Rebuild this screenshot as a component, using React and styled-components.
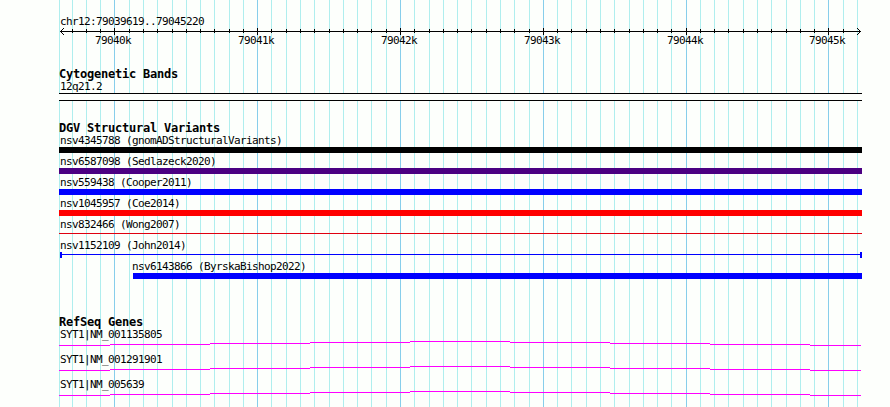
import styled, { createGlobalStyle } from 'styled-components';

const GlobalStyle = createGlobalStyle`
  body {
    margin: 0;
    background: #fdfffc;
  }
`;

const Browser = styled.main`
  position: relative;
  width: 890px;
  height: 407px;
  overflow: hidden;
  background: #fdfffc;
  color: #000;
  font-family: 'DejaVu Sans Mono', monospace;
`;

const GridLayer = styled.svg`
  position: absolute;
  top: 0;
  left: 0;
`;

const Panel = styled.div`
  position: relative;
  display: flex;
  flex-direction: column;
  width: 803px;
  padding: 15px 0 0 59px;
`;

const Section = styled.section`
  display: flex;
  flex-direction: column;
  height: ${({ $height }) => $height}px;
`;

const Title = styled.h2`
  margin: 0;
  height: 12px;
  font-size: 12px;
  font-weight: 700;
  line-height: 12px;
  letter-spacing: -0.224px;
  white-space: pre;
`;

const Label = styled.div`
  height: 12px;
  padding: 1px 0 0 1px;
  font-size: 11px;
  line-height: 12px;
  letter-spacing: -0.622px;
  white-space: pre;
`;

const Ruler = styled.svg`
  display: block;
  height: 7px;
`;

const Scale = styled.div`
  display: grid;
  grid-template-columns: 143px 143px 143px 143px 142px 80px;
  width: 794px;
  margin-top: -1px;
  padding-left: 35px;
`;

const Band = styled.div`
  height: 6px;
  border: solid #000;
  border-width: 1px 0;
  background: #fdfffc;
`;

const Variant = styled.div`
  height: 21px;
  padding-left: ${({ $start }) => $start || 0}px;

  ${Label} {
    margin-left: ${({ $start }) => ($start ? -2 : 0)}px;
  }
`;

const Bar = styled.div`
  height: 6px;
  background: ${({ $color }) => $color};
`;

const ThinLine = styled.div`
  height: 1px;
  margin-top: 2px;
  background: #e00010;
`;

const Span = styled.div`
  display: flex;
  align-items: center;
  box-sizing: border-box;
  height: 6px;
  margin-left: 1px;
  border: solid #00f;
  border-width: 0 2px;

  &::before {
    content: '';
    flex: 1;
    height: 1px;
    margin-bottom: 1px;
    background: #00f;
  }
`;

const Gene = styled.div`
  height: 25px;
`;

const Intron = styled.svg`
  display: block;
`;

const START = 59;

const gridLines = [
  59, 72, 86, 100, 114, 129, 143, 157, 172, 186, 200, 214, 229, 243, 257, 271,
  286, 300, 314, 329, 343, 357, 371, 386, 400, 414, 429, 443, 457, 471, 486,
  500, 514, 529, 543, 557, 571, 586, 600, 614, 629, 643, 657, 671, 686, 700,
  714, 728, 743, 757, 771, 786, 800, 814, 828, 843, 857,
];
const majorLines = [114, 257, 400, 543, 686, 828];

const variants = [
  { name: 'nsv4345788 (gnomADStructuralVariants)', color: '#000' },
  { name: 'nsv6587098 (Sedlazeck2020)', color: '#4b0082' },
  { name: 'nsv559438 (Cooper2011)', color: '#00f' },
  { name: 'nsv1045957 (Coe2014)', color: '#f00' },
  { name: 'nsv832466 (Wong2007)', type: 'line' },
  { name: 'nsv1152109 (John2014)', type: 'span' },
  { name: 'nsv6143866 (ByrskaBishop2022)', color: '#00f', start: 74 },
];

const genes = ['SYT1|NM_001135805', 'SYT1|NM_001291901', 'SYT1|NM_005639'];

// x, width and y of every flat step of the intron
const steps = [
  [0, 51, 4],
  [51, 100, 3],
  [151, 100, 2],
  [251, 100, 1],
  [351, 100, 0],
  [451, 100, 1],
  [551, 100, 2],
  [651, 100, 3],
  [751, 51, 4],
];

const Grid = () => (
  <GridLayer width="890" height="407" shapeRendering="crispEdges">
    {gridLines.map((x) => (
      <rect
        key={x}
        x={x}
        width="1"
        height="407"
        fill={majorLines.includes(x) ? '#87ceeb' : '#afeeee'}
      />
    ))}
  </GridLayer>
);

const Coordinates = () => (
  <Ruler width="803" height="7" shapeRendering="crispEdges">
    <rect x="1" y="3" width="801" height="1" />
    {gridLines.slice(1, -1).map((x) => {
      const major = majorLines.includes(x);
      return (
        <rect
          key={x}
          x={x - START}
          y={major ? 0 : 1}
          width="1"
          height={major ? 7 : 4}
        />
      );
    })}
    {[1, 2, 3].map((n) => (
      <g key={n}>
        <rect x={1 + n} y={3 - n} width="1" height="1" />
        <rect x={1 + n} y={3 + n} width="1" height="1" />
        <rect x={801 - n} y={3 - n} width="1" height="1" />
        <rect x={801 - n} y={3 + n} width="1" height="1" />
      </g>
    ))}
  </Ruler>
);

const Glyph = ({ item }) => {
  if (item.type === 'line') return <ThinLine />;
  if (item.type === 'span') return <Span />;
  return <Bar $color={item.color} />;
};

const App = () => (
  <>
    <GlobalStyle />
    <Browser>
      <Grid />
      <Panel>
        <Section $height={53}>
          <Label>chr12:79039619..79045220</Label>
          <Coordinates />
          <Scale>
            {majorLines.map((x, index) => (
              <Label key={x}>{`${79040 + index}k`}</Label>
            ))}
          </Scale>
        </Section>
        <Section $height={54}>
          <Title>Cytogenetic Bands</Title>
          <Label>12q21.2</Label>
          <Band />
        </Section>
        <Section $height={194}>
          <Title>DGV Structural Variants</Title>
          {variants.map((item) => (
            <Variant key={item.name} $start={item.start}>
              <Label>{item.name}</Label>
              <Glyph item={item} />
            </Variant>
          ))}
        </Section>
        <Section $height={91}>
          <Title>RefSeq Genes</Title>
          {genes.map((name) => (
            <Gene key={name}>
              <Label>{name}</Label>
              <Intron width="803" height="6" shapeRendering="crispEdges">
                {steps.map(([x, width, y]) => (
                  <rect key={x} x={x} y={y} width={width} height="1" fill="#f0f" />
                ))}
              </Intron>
            </Gene>
          ))}
        </Section>
      </Panel>
    </Browser>
  </>
);

export default App;
